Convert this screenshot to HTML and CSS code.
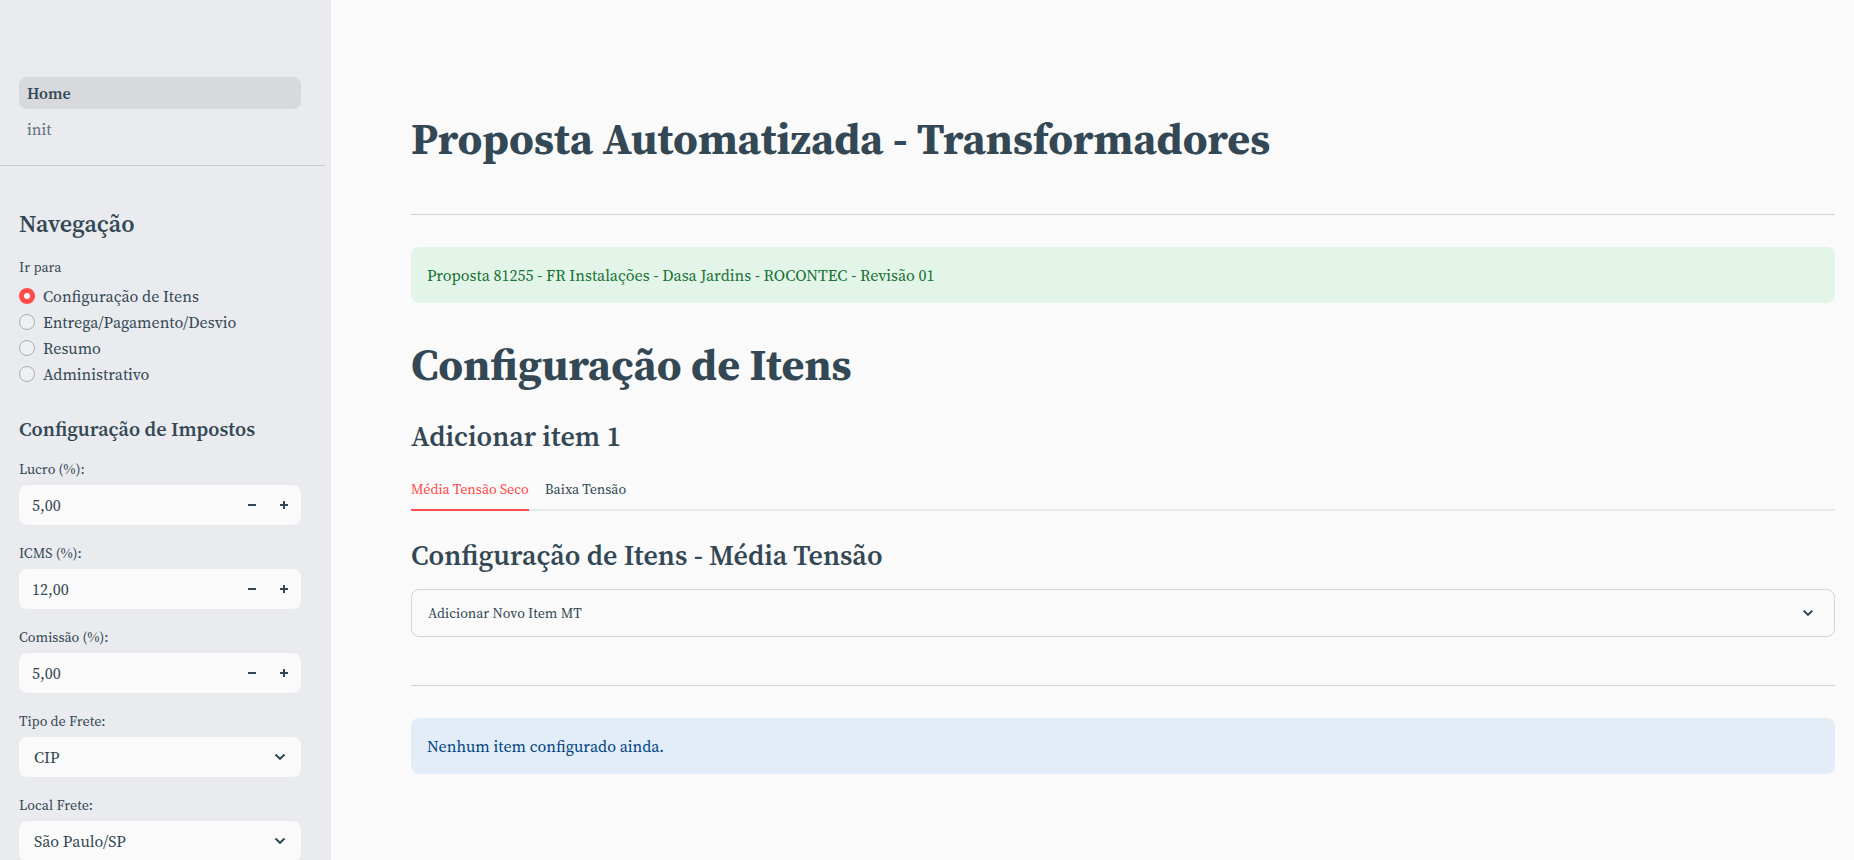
FILE: index.html
```html
<!DOCTYPE html>
<html lang="pt-BR">
<head>
<meta charset="utf-8">
<meta name="viewport" content="width=device-width, initial-scale=1">
<title>Proposta Automatizada - Transformadores</title>
<link rel="stylesheet" href="styles.css">
</head>
<body>
<div class="app">
  <aside class="sidebar">
    <nav class="pages">
      <a class="page-link current" href="#home" aria-current="page">Home</a>
      <a class="page-link" href="#init">init</a>
    </nav>
    <div class="sidebar-body">
      <h2 class="nav-title">Navegação</h2>
      <fieldset class="radio-group">
        <legend class="label">Ir para</legend>
        <label class="radio-row"><input class="radio" type="radio" name="go" checked>Configuração de Itens</label>
        <label class="radio-row"><input class="radio" type="radio" name="go">Entrega/Pagamento/Desvio</label>
        <label class="radio-row"><input class="radio" type="radio" name="go">Resumo</label>
        <label class="radio-row"><input class="radio" type="radio" name="go">Administrativo</label>
      </fieldset>
      <h3 class="tax-title">Configuração de Impostos</h3>
      <div class="fields">
        <div class="field">
          <label class="label" for="lucro">Lucro (%):</label>
          <div class="control">
            <input class="number" id="lucro" type="text" inputmode="decimal" value="5,00">
            <button class="step" type="button" aria-label="Diminuir lucro"><svg viewBox="0 0 8 8" width="8" height="8"><path d="M0 3h8v2H0z"/></svg></button>
            <button class="step" type="button" aria-label="Aumentar lucro"><svg viewBox="0 0 8 8" width="8" height="8"><path d="M3 0h2v3h3v2H5v3H3V5H0V3h3z"/></svg></button>
          </div>
        </div>
        <div class="field">
          <label class="label" for="icms">ICMS (%):</label>
          <div class="control">
            <input class="number" id="icms" type="text" inputmode="decimal" value="12,00">
            <button class="step" type="button" aria-label="Diminuir ICMS"><svg viewBox="0 0 8 8" width="8" height="8"><path d="M0 3h8v2H0z"/></svg></button>
            <button class="step" type="button" aria-label="Aumentar ICMS"><svg viewBox="0 0 8 8" width="8" height="8"><path d="M3 0h2v3h3v2H5v3H3V5H0V3h3z"/></svg></button>
          </div>
        </div>
        <div class="field">
          <label class="label" for="comissao">Comissão (%):</label>
          <div class="control">
            <input class="number" id="comissao" type="text" inputmode="decimal" value="5,00">
            <button class="step" type="button" aria-label="Diminuir comissão"><svg viewBox="0 0 8 8" width="8" height="8"><path d="M0 3h8v2H0z"/></svg></button>
            <button class="step" type="button" aria-label="Aumentar comissão"><svg viewBox="0 0 8 8" width="8" height="8"><path d="M3 0h2v3h3v2H5v3H3V5H0V3h3z"/></svg></button>
          </div>
        </div>
        <div class="field">
          <label class="label" for="tipo">Tipo de Frete:</label>
          <div class="control">
            <select class="select" id="tipo"><option>CIP</option></select>
            <svg class="select-arrow" viewBox="0 0 10 6" width="10" height="6"><path d="M.4.6 5 4.8 9.6.6"/></svg>
          </div>
        </div>
        <div class="field">
          <label class="label" for="local">Local Frete:</label>
          <div class="control">
            <select class="select" id="local"><option>São Paulo/SP</option></select>
            <svg class="select-arrow" viewBox="0 0 10 6" width="10" height="6"><path d="M.4.6 5 4.8 9.6.6"/></svg>
          </div>
        </div>
      </div>
    </div>
  </aside>
  <main class="main">
    <h1 class="title">Proposta Automatizada - Transformadores</h1>
    <hr class="rule title-rule">
    <p class="alert success">Proposta 81255 - FR Instalações - Dasa Jardins - ROCONTEC - Revisão 01</p>
    <h1 class="title section-title">Configuração de Itens</h1>
    <h2 class="subtitle add-title">Adicionar item 1</h2>
    <div class="tabs" role="tablist">
      <button class="tab active" type="button" role="tab" aria-selected="true">Média Tensão Seco</button>
      <button class="tab" type="button" role="tab" aria-selected="false">Baixa Tensão</button>
    </div>
    <h2 class="subtitle mt-title">Configuração de Itens - Média Tensão</h2>
    <button class="expander" type="button" aria-expanded="false">
      <span>Adicionar Novo Item MT</span>
      <svg class="chevron" viewBox="0 0 10 6" width="10" height="6"><path d="M.6.6 5 4.8 9.4.6"/></svg>
    </button>
    <hr class="rule">
    <p class="alert info">Nenhum item configurado ainda.</p>
  </main>
</div>
</body>
</html>
```
FILE: styles.css
```css
* {
  box-sizing: border-box;
}

body {
  margin: 0;
  background: #fafafa;
  color: #334854;
  font-family: "Source Serif Pro", "Source Serif 4", "Noto Serif CJK SC", "Liberation Serif", serif;
  font-size: 16px;
  line-height: 26px;
}

h1, h2, h3, p, fieldset, legend {
  margin: 0;
  padding: 0;
  border: 0;
}

button, input, select {
  margin: 0;
  color: inherit;
  font: inherit;
}

.app {
  display: flex;
  height: 100vh;
}

.sidebar {
  flex: 0 0 331px;
  overflow-y: auto;
  scrollbar-width: none;
  background: #eaebef;
}

.pages {
  display: flex;
  flex-direction: column;
  gap: 4px;
  margin-right: 6px;
  padding: 77px 24px 20px 19px;
  border-bottom: 1px solid #c7c9ce;
}

.page-link {
  padding: 3px 8px;
  border-radius: 8px;
  color: #5f6f7a;
  text-decoration: none;
}

.page-link.current {
  background: #d8d9dc;
  color: #334854;
  font-weight: 600;
}

.sidebar-body {
  padding: 43px 30px 96px 19px;
}

.nav-title {
  font-size: 24px;
  font-weight: 600;
  line-height: 30px;
}

.label {
  display: block;
  font-size: 14px;
  line-height: 22px;
}

.radio-group {
  min-width: 0;
  margin-top: 17px;
}

.radio-group .label {
  margin-bottom: 5px;
}

.radio-row {
  display: flex;
  align-items: center;
  gap: 8px;
}

.radio {
  appearance: none;
  width: 16px;
  height: 16px;
  border: 1px solid #a5afb6;
  border-radius: 50%;
  background: #eff0f3;
}

.radio:checked {
  border: 5px solid #ff4b4b;
  background: #fafafa;
}

.tax-title {
  margin: 30px 0 17px;
  font-size: 20px;
  font-weight: 600;
  line-height: 24px;
}

.fields {
  display: grid;
  gap: 17px;
}

.field {
  display: grid;
  gap: 5px;
}

.control {
  position: relative;
  display: flex;
  height: 40px;
  overflow: hidden;
  border-radius: 8px;
  background: #fafafa;
}

.number {
  flex: 1;
  min-width: 0;
  padding: 0 13px;
  border: 0;
  background: transparent;
}

.step {
  display: grid;
  place-items: center;
  width: 32px;
  padding: 0;
  border: 0;
  background: transparent;
  fill: #334854;
}

.step:last-child {
  margin-right: 1px;
}

.select {
  appearance: none;
  flex: 1;
  min-width: 0;
  padding: 0 40px 0 15px;
  border: 0;
  background: transparent;
}

.select-arrow {
  position: absolute;
  top: 17px;
  right: 16px;
  pointer-events: none;
}

.select-arrow, .chevron {
  overflow: visible;
  fill: none;
  stroke: #334854;
  stroke-width: 2;
}

.main {
  flex: 1;
  min-width: 0;
  overflow-y: auto;
  padding: 113px 19px 80px 80px;
}

.title {
  font-size: 44px;
  font-weight: 700;
  line-height: 52px;
}

.rule {
  height: 1px;
  margin: 48px 0 32px;
  border: 0;
  background: #ced5d7;
}

.title-rule {
  margin-top: 49px;
}

.alert {
  padding: 15px 16px;
  border-radius: 8px;
}

.success {
  background: #e3f5e9;
  color: #177233;
}

.info {
  background: #e3edf8;
  color: #004280;
}

.section-title {
  margin-top: 36px;
}

.subtitle {
  font-size: 28px;
  font-weight: 600;
  line-height: 34px;
}

.add-title {
  margin-top: 28px;
}

.tabs {
  display: flex;
  gap: 16px;
  margin-top: 18px;
  box-shadow: inset 0 -2px #e4e9e9;
}

.tab {
  height: 40px;
  padding: 0 0 2px;
  border: 0;
  border-bottom: 2px solid transparent;
  background: transparent;
  font-size: 14px;
}

.tab.active {
  border-color: #ff4b4b;
  color: #ff4b4b;
}

.mt-title {
  margin: 27px 0 17px;
}

.expander {
  display: flex;
  align-items: center;
  justify-content: space-between;
  width: 100%;
  height: 48px;
  padding: 0 21px 0 16px;
  border: 1px solid #d1d6d8;
  border-radius: 8px;
  background: transparent;
  font-size: 14px;
}
```
